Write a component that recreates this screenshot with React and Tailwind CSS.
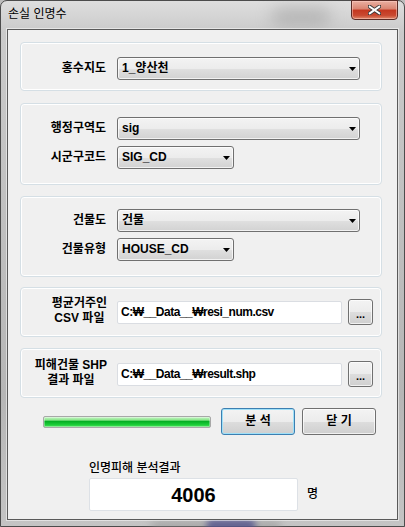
import React from "react";

function Arrow() {
  return (
    <svg width="7" height="4" viewBox="0 0 7 4" className="block">
      <path d="M0 0H7L3.5 4Z" fill="#000" />
    </svg>
  );
}

function Combo({ w, value }) {
  return (
    <div
      className={`${w} h-[23px] rounded-[3px] border border-[#707070] bg-[linear-gradient(to_bottom,#f3f3f3,#ececec_50%,#e0e0e0_51%,#d2d2d2)] shadow-[inset_0_0_0_1px_rgba(255,255,255,0.7)] flex items-center justify-between pl-[4px] pr-[3px]`}
    >
      <span className="font-bold text-[12px] leading-[15px] text-black">{value}</span>
      <Arrow />
    </div>
  );
}

function Row({ label, children }) {
  return (
    <div className="flex items-center">
      <div className="w-[85px] text-right font-bold text-[12px] leading-[15px] text-black">{label}</div>
      <div className="ml-[11px]">{children}</div>
    </div>
  );
}

function Group({ className, children }) {
  return (
    <div
      className={`w-[362px] ml-[12px] rounded-[4px] border border-[#d5dfe5] shadow-[inset_0_0_0_1px_#ffffff] ${className}`}
    >
      {children}
    </div>
  );
}

function FileRow({ lines, value }) {
  return (
    <div className="flex items-center h-[26px]">
      <div className="w-[86px] text-right">
        <div className="inline-block text-center font-bold text-[12px] leading-[15px] text-black">
          {lines.map((l, i) => (
            <div key={i} className="whitespace-nowrap">{l}</div>
          ))}
        </div>
      </div>
      <div className="ml-[10px] w-[225px] h-[23px] bg-white border border-[#dadde2] rounded-[2px] flex items-center pl-[3px]">
        <span className="font-bold text-[12px] leading-[15px] text-black whitespace-nowrap tracking-[-0.5px]">{value}</span>
      </div>
      <div className="ml-[6px] w-[25px] h-[26px] rounded-[3px] border border-[#707070] bg-[linear-gradient(to_bottom,#f3f3f3,#ececec_50%,#dddddd_51%,#cfcfcf)] shadow-[inset_0_0_0_1px_rgba(255,255,255,0.7)] flex items-center justify-center">
        <span className="font-bold text-[11px] leading-[11px] text-black pt-[4px]">...</span>
      </div>
    </div>
  );
}

export default function App() {
  return (
    <div className="w-[405px] h-[527px] relative overflow-hidden bg-[#bdbdbd] font-['Liberation_Sans','Noto_Sans_CJK_KR',sans-serif]">
      <div className="w-[405px] h-[527px] rounded-t-[7px] border border-[#4c4c4c] bg-[linear-gradient(to_bottom,#dedede,#cacaca_6%,#c0c0c0_40%,#b6b6b6_75%,#c4c4c4)] flex flex-col relative">
        {/* glass blur decorations */}
        <div className="absolute left-[270px] top-[6px] w-[60px] h-[20px] rounded-full bg-[#9a9a9a] blur-[8px] opacity-50" />
        <div className="absolute left-[205px] bottom-[-6px] w-[50px] h-[12px] rounded-full bg-[#2a2a8a] blur-[3px] opacity-80" />
        <div className="absolute left-[150px] bottom-[-4px] w-[130px] h-[8px] rounded-full bg-[#8a8a8a] blur-[4px] opacity-60" />

        {/* title bar */}
        <div className="h-[28px] flex items-start relative">
          <div className="pl-[7px] pt-[6px] text-[12px] leading-[15px] text-black">손실 인명수</div>
          <div className="ml-auto mr-[6px] -mt-[1px] w-[47px] h-[20px] rounded-b-[4px] border border-[#5a2b25] bg-[linear-gradient(to_bottom,#eab0a2,#d98370_45%,#c4371f_50%,#c94a31_80%,#e08a6c)] shadow-[inset_0_0_0_1px_rgba(255,210,200,0.5)] flex items-center justify-center">
            <svg width="13" height="10" viewBox="0 0 13 10">
              <path
                d="M1.5 1.5L11.5 8.5M11.5 1.5L1.5 8.5"
                stroke="#3a3a3a"
                strokeWidth="3.8"
                strokeLinecap="square"
              />
              <path
                d="M1.8 1.7L11.2 8.3M11.2 1.7L1.8 8.3"
                stroke="#ffffff"
                strokeWidth="2"
                strokeLinecap="square"
              />
            </svg>
          </div>
        </div>

        {/* client area */}
        <div className="mx-[6px] h-[491px] border border-[#5a5a5a] bg-[#f0f0f0] flex flex-col relative shadow-[0_0_0_1px_rgba(255,255,255,0.5)]">
          <Group className="mt-[12px] h-[49px] pt-[14px]">
            <Row label="홍수지도">
              <Combo w="w-[243px]" value="1_양산천" />
            </Row>
          </Group>

          <Group className="mt-[12px] h-[82px] pt-[13px] flex flex-col gap-[6px]">
            <Row label="행정구역도">
              <Combo w="w-[243px]" value="sig" />
            </Row>
            <Row label="시군구코드">
              <Combo w="w-[117px]" value="SIG_CD" />
            </Row>
          </Group>

          <Group className="mt-[11px] h-[81px] pt-[12px] flex flex-col gap-[6px]">
            <Row label="건물도">
              <Combo w="w-[243px]" value="건물" />
            </Row>
            <Row label="건물유형">
              <Combo w="w-[117px]" value="HOUSE_CD" />
            </Row>
          </Group>

          <Group className="mt-[10px] h-[50px] pt-[11px]">
            <FileRow lines={["평균거주인", "CSV 파일"]} value="C:₩__Data__₩resi_num.csv" />
          </Group>

          <Group className="mt-[11px] h-[50px] pt-[12px]">
            <FileRow lines={["피해건물 SHP", "결과 파일"]} value="C:₩__Data__₩result.shp" />
          </Group>

          {/* progress + buttons */}
          <div className="mt-[10px] flex items-center h-[27px]">
            <div className="ml-[35px] w-[168px] h-[12px] rounded-[2px] border border-[#a8a8a8] bg-[linear-gradient(to_bottom,#c8f5c8,#8ce68c_30%,#06b025_45%,#1ed03a_80%,#5fe06a)] shadow-[inset_0_0_0_1px_rgba(255,255,255,0.35)]" />
            <div className="ml-[10px] w-[74px] h-[27px] rounded-[3px] border border-[#3c7fb1] bg-[linear-gradient(to_bottom,#f3f3f3,#ececec_50%,#dddddd_51%,#cfcfcf)] shadow-[inset_0_0_0_1px_#9fe0f8] flex items-center justify-center">
              <span className="font-bold text-[12px] leading-[15px] text-black">분 석</span>
            </div>
            <div className="ml-[7px] w-[74px] h-[27px] rounded-[3px] border border-[#707070] bg-[linear-gradient(to_bottom,#f3f3f3,#ececec_50%,#dddddd_51%,#cfcfcf)] shadow-[inset_0_0_0_1px_rgba(255,255,255,0.7)] flex items-center justify-center">
              <span className="font-bold text-[12px] leading-[15px] text-black">닫 기</span>
            </div>
          </div>

          {/* result */}
          <div className="mt-[26px] ml-[81px] text-[12px] leading-[15px] font-medium text-black">인명피해 분석결과</div>
          <div className="mt-[2px] ml-[81px] flex items-center">
            <div className="w-[209px] h-[33px] bg-white border border-[#dde1e6] rounded-[2px] flex items-center justify-center">
              <span className="font-bold text-[20px] leading-[24px] text-black">4006</span>
            </div>
            <div className="ml-[9px] text-[12px] leading-[15px] font-medium text-black">명</div>
          </div>
        </div>
      </div>
    </div>
  );
}
